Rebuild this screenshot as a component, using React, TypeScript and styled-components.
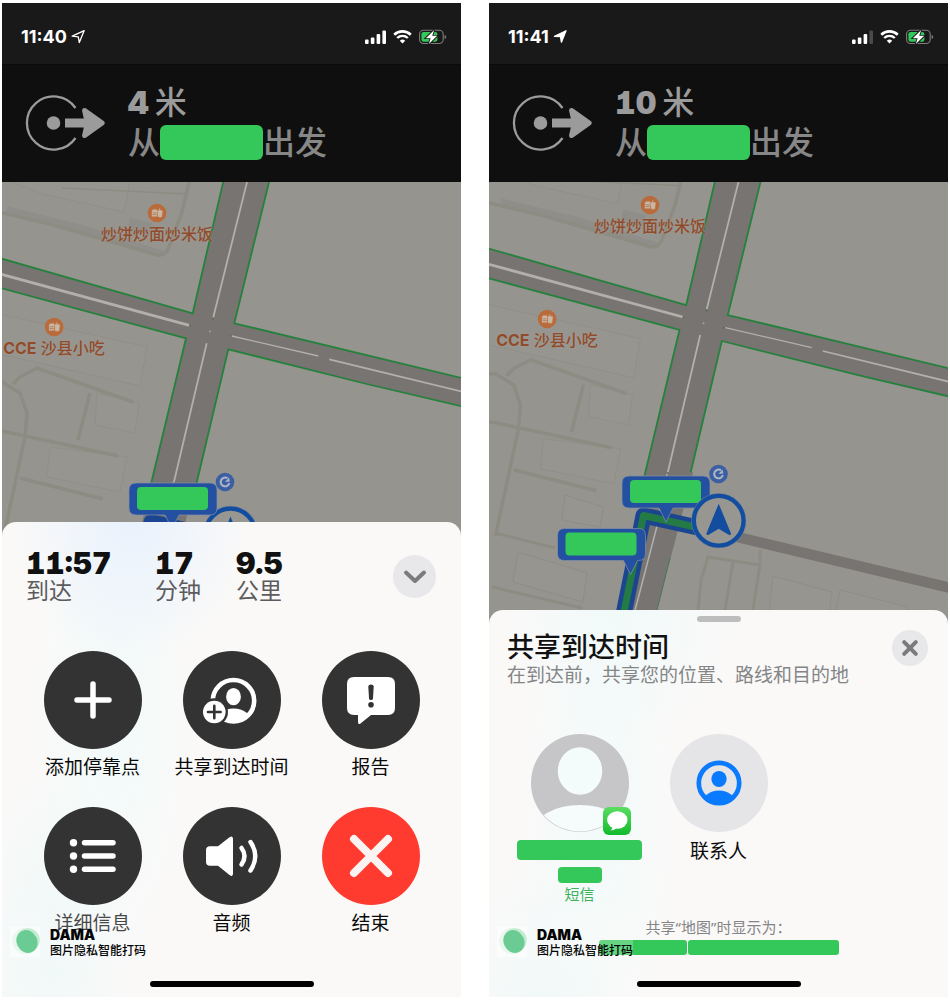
import React from "react";
import styled, { createGlobalStyle, css } from "styled-components";

const GlobalStyle = createGlobalStyle`
  *, *::before, *::after { box-sizing: border-box; }
  body {
    margin: 0;
    background: #fff;
    font-family: Inter, "Noto Sans", "Noto Sans CJK SC", sans-serif;
    color: #111;
  }
  button { font: inherit; color: inherit; border: 0; padding: 0; background: none; cursor: pointer; }
  h2, p { margin: 0; }
  svg { display: block; }
`;

const wideDigits = css`
  font-feature-settings: "tnum", "cv01";
  font-optical-sizing: none;
`;

const Page = styled.main`
  display: grid;
  grid-template-columns: 1fr 1fr;
  gap: 28px;
  min-height: 100vh;
  padding: 3px 2px;
`;

const Phone = styled.section`
  position: relative;
  display: flex;
  flex-direction: column;
  min-width: 0;
  overflow: hidden;
  background: #0f0f0f;
`;

const StatusBar = styled.header`
  display: flex;
  align-items: center;
  justify-content: space-between;
  height: 62px;
  padding: 6px 14px 0 19px;
  background: #191919;
  border-bottom: 1px solid #0a0a0a;
  color: #fff;
`;

const Clock = styled.div`
  display: flex;
  align-items: center;
  gap: 4px;
  font-size: 18px;
  font-weight: 700;
  line-height: 22px;
  font-optical-sizing: none;
`;

const StatusIcons = styled.div`
  display: flex;
  align-items: center;
  gap: 7px;
`;

const Banner = styled.div`
  display: flex;
  align-items: center;
  gap: 23px;
  height: 117px;
  padding: 0 23px 2px;
  background: #0f0f0f;
  color: #8f8f8f;
`;

const BannerLine = styled.p<{ $lead?: boolean }>`
  display: flex;
  align-items: center;
  gap: ${(p) => (p.$lead ? "6px" : "0")};
  font-size: 32px;
  line-height: 40px;
  font-weight: 500;
  color: ${(p) => (p.$lead ? "#9b9b9b" : "#878787")};
  white-space: nowrap;

  b {
    font-weight: 900;
    ${wideDigits}
  }
`;

const Redaction = styled.span<{ $w: number; $h: number; $r?: number }>`
  display: block;
  flex: none;
  width: ${(p) => p.$w}px;
  height: ${(p) => p.$h}px;
  border-radius: ${(p) => p.$r ?? 4}px;
  background: #34c759;
`;

const MapArea = styled.div`
  position: relative;
  flex: 1;
  min-height: 280px;
  margin-bottom: -14px;
  overflow: hidden;
  background: #96948e;
`;

const MapCanvas = styled.svg`
  position: absolute;
  inset: 0 0 auto 0;
  width: 100%;
  height: auto;
`;

const Poi = styled.div<{ $x: number; $y: number }>`
  position: absolute;
  left: ${(p) => p.$x}px;
  top: ${(p) => p.$y}px;
  transform: translateX(-50%);
  display: flex;
  flex-direction: column;
  align-items: center;
  gap: 1px;
  font-size: 16px;
  font-weight: 500;
  line-height: 20px;
  color: #914b2b;
  white-space: nowrap;
  text-shadow: 0 0 2px #a5a29a;

  b { font-weight: 700; }
`;

const Sheet = styled.div<{ $blue?: boolean }>`
  position: relative;
  display: flex;
  flex-direction: column;
  border-radius: 14px 14px 0 0;
  background:
    radial-gradient(ellipse 120px 140px at 130px 0, ${(p) => (p.$blue ? "rgba(226, 238, 255, 0.7)" : "rgba(238, 250, 250, 0.7)")}, transparent),
    radial-gradient(ellipse 80px 240px at 110px 200px, rgba(238, 251, 251, 0.7), transparent),
    radial-gradient(ellipse 80px 180px at 50px 420px, rgba(232, 249, 249, 0.6), transparent),
    #faf9f8;
`;

const TripHeader = styled.div`
  display: flex;
  align-items: center;
  justify-content: space-between;
  margin: 26px 25px 47px 24px;
`;

const Stats = styled.div`
  display: grid;
  grid-template-columns: 92px 44px 51px;
  gap: 37px;
`;

const Stat = styled.div`
  white-space: nowrap;

  strong {
    display: block;
    font-size: 30px;
    font-weight: 900;
    line-height: 30px;
    ${wideDigits}
  }
  span {
    display: block;
    font-size: 23px;
    line-height: 26px;
    color: #5c5c5e;
  }
`;

const RoundButton = styled.button<{ $size: number }>`
  display: grid;
  place-items: center;
  flex: none;
  width: ${(p) => p.$size}px;
  height: ${(p) => p.$size}px;
  border-radius: 50%;
  background: #e8e8ea;
`;

const TileGrid = styled.div`
  display: grid;
  grid-template-columns: repeat(3, 139px);
  justify-content: center;
  row-gap: 27px;
`;

const Tile = styled.button`
  display: flex;
  flex-direction: column;
  align-items: center;
  justify-content: flex-start;
  gap: 8px;
  font-size: 19px;
  line-height: 24px;
  white-space: nowrap;
  color: #0a0a0a;
`;

const Disc = styled.span<{ $color: string }>`
  position: relative;
  display: block;
  width: 98px;
  height: 98px;
  border-radius: 50%;
  background: ${(p) => p.$color};
`;

const AppBadge = styled.span`
  position: absolute;
  right: -2px;
  bottom: -3px;
`;

const TripTiles = styled(TileGrid)`
  margin-bottom: 45px;

  ${Tile} { gap: 7px; }
`;

const ContactDetails = styled.span`
  display: flex;
  flex-direction: column;
  align-items: center;
  gap: 7px;
`;

const Channel = styled.span`
  margin-top: -7px;
  font-size: 15px;
  color: #3db25c;
`;

const Grabber = styled.span`
  width: 44px;
  height: 6px;
  margin: 6px auto 8px;
  border-radius: 3px;
  background: #bdbdbe;
`;

const ShareHeader = styled.div`
  display: flex;
  align-items: flex-start;
  justify-content: space-between;
  margin: 0 20px 48px 18px;

  h2 {
    font-size: 27px;
    line-height: 36px;
    font-weight: 500;
  }
  p {
    font-size: 19px;
    line-height: 20px;
    color: #858587;
    white-space: nowrap;
  }
`;

const ShareFooter = styled.div`
  display: flex;
  flex-direction: column;
  align-items: center;
  gap: 3px;
  margin: 10px 0 26px;
  font-family: "Noto Sans", "Noto Sans CJK SC", sans-serif;
  font-size: 15px;
  line-height: 20px;
  color: #858587;
`;

const RedactedName = styled.div`
  display: flex;
  gap: 1px;
`;

const HomeBar = styled.span`
  width: 164px;
  height: 6px;
  margin: 0 auto 10px;
  border-radius: 3px;
  background: #000;
`;

const Watermark = styled.div`
  position: absolute;
  left: 8px;
  bottom: 36px;
  display: flex;
  align-items: flex-end;
  gap: 10px;
  height: 50px;
  color: #050505;
  background: rgba(250, 252, 252, 0.25);

  svg { margin-bottom: 4px; }
  strong { display: block; font-size: 14px; font-weight: 900; line-height: 16px; }
  span { display: block; font-size: 12px; font-weight: 500; line-height: 16px; padding-bottom: 2px; }
`;

const LocationArrow = ({ filled }: { filled?: boolean }) => (
  <svg width="15" height="15" viewBox="0 0 15 15" aria-hidden="true">
    <path
      d={filled ? "M1.500 7.400 13 1.800 8.400 13.200 7.500 7.600z" : "M1.200 7.200 13.200 1.600 8.300 13.600 7.300 7.900z"}
      fill={filled ? "#fff" : "none"}
      stroke="#fff"
      strokeWidth="1.300"
      strokeLinejoin="round"
    />
  </svg>
);

const Signal = ({ bars }: { bars: number }) => (
  <svg width="21" height="14" viewBox="0 0 21 14" aria-hidden="true">
    {[4.5, 6.5, 10, 13.5].map((h, i) => (
      <rect key={i} x={i * 5.8} y={14 - h} width="3.6" height={h} rx="1.1" fill={i < bars ? "#fff" : "#4b4b4b"} />
    ))}
  </svg>
);

const Wifi = () => (
  <svg width="19" height="14" viewBox="0 0 19 14" aria-hidden="true">
    <path d="M1.2 4.7a12 12 0 0 1 16.6 0" fill="none" stroke="#fff" strokeWidth="2.6" />
    <path d="M4.2 8a7.6 7.6 0 0 1 10.6 0" fill="none" stroke="#fff" strokeWidth="2.4" />
    <path d="M6.8 10.7a4 4 0 0 1 5.4 0L9.5 13.6z" fill="#fff" />
  </svg>
);

const Battery = () => (
  <svg width="28" height="16" viewBox="0 0 28 16" aria-hidden="true">
    <rect x=".6" y="1.3" width="23.6" height="13.2" rx="4" fill="none" stroke="#7d7d7d" strokeWidth="1.1" />
    <path d="M25.6 6v4q1.7-.6 1.7-2t-1.7-2z" fill="#7d7d7d" />
    <rect x="2.4" y="3.1" width="16" height="9.6" rx="2.2" fill="#34c759" />
    <path d="M15.200 1 6.800 9.200h4.800L9.800 15 18.200 6.800h-5z" fill="#fff" stroke="#191919" strokeWidth="1.800" paintOrder="stroke" />
  </svg>
);

const DepartIcon = () => (
  <svg width="80" height="56" viewBox="0 0 80 56" fill="#9b9b9b" aria-hidden="true">
    <path d="M50.5 13A26.6 26.6 0 1 0 50.5 43" fill="none" stroke="#9b9b9b" strokeWidth="2.3" />
    <circle cx="28.5" cy="28" r="6.8" />
    <path d="M40 23.6h18.8L57 15.5q.2-3.6 3.8-2.2L79 26.3q1.5 1.7 0 3.4L60.800 42.700q-3.600 1.400-3.800-2.200L58.800 32.400H40z" />
  </svg>
);

const Status = ({ time, filled, bars }: { time: string; filled?: boolean; bars: number }) => (
  <StatusBar>
    <Clock>
      {time}
      <LocationArrow filled={filled} />
    </Clock>
    <StatusIcons>
      <Signal bars={bars} />
      <Wifi />
      <Battery />
    </StatusIcons>
  </StatusBar>
);

const Direction = ({ distance }: { distance: string }) => (
  <Banner>
    <DepartIcon />
    <div>
      <BannerLine $lead>
        <b>{distance}</b>
        <span>米</span>
      </BannerLine>
      <BannerLine>
        从
        <Redaction $w={103} $h={35} $r={6} />
        出发
      </BannerLine>
    </div>
  </Banner>
);

const FoodIcon = () => (
  <svg width="20" height="20" viewBox="0 0 20 20" aria-hidden="true">
    <circle cx="10" cy="10" r="9.3" fill="#b96b3c" />
    <path d="M4.800 8.500 5.800 6.600h4.200v7H4.800z" fill="#c9b7a4" />
    <path d="M5.500 9.800h4M5.500 11.600h4" stroke="#a9673f" strokeWidth=".7" />
    <path d="M10.800 7.800h4.400l-.6 6h-3.200zM12.700 7.600V5.400" fill="#c9b7a4" stroke="#c9b7a4" strokeWidth=".9" />
  </svg>
);

const Streets = () => (
  <>
    <g fill="#97958f" stroke="#908f88" strokeWidth="1">
      <path d="M-20 128 145 165 138 204-20 168z" />
      <path d="M95 211 137 221 133 251 93 243z" />
      <path d="M48 265 125 275 118 310 45 295z" />
      <path d="M-20-12 130-12 122 30 40 12z" />
      <path d="M128 36 150 41 147 53 126 47z" fill="#8f8e8a" stroke="none" />
    </g>
    <path d="M5 28 82 47 160 72" fill="none" stroke="#8f8e8a" strokeWidth="7" />
    <g fill="none" stroke="#8d8c82" strokeWidth="3.500" strokeLinejoin="round">
      <path d="M-20 26 48 42 121 63 155 73Q165 74 168 62L180 30 190-12" />
      <path d="M-20 200H0L18 211 25 231 23 255 0 362" />
      <path d="M11 202 18 195 35 186 131 220" />
      <path d="M88 211 76 258M-20 246 0 249 116 274M18 296 101 317" />
      <path d="M60 6 186 12" strokeWidth="1.500" />
    </g>
  </>
);

const Roads = () => (
  <>
    <path d="M149 302 184 156.300-20 101V71L190.700 131.300 224-12H270L232.300 141.300 480 201V229L364.700 202 226.300 167.300 192 312z" fill="#777472" />
    <g fill="none" stroke="#25813c" strokeWidth="1.800">
      <path d="M-20 71 190.700 131.300 224-12M270-12 232.300 141.300 480 201" />
      <path d="M-20 101 184 156.300 149 302M192 312 226.300 167.300 364.700 202 480 229" />
    </g>
    <g fill="none" stroke="#b2b0ac" strokeWidth="1.800">
      <path d="M248-12 211.300 135.300M204.700 161.300 171 304" />
      <path d="M-20 87 187.300 143.300" strokeWidth="2.800" />
      <path d="M229.700 154 316.300 174" strokeWidth="1.300" />
      <path d="M327.300 177.300 480 214.500" />
    </g>
    <g fill="#55734f">
      <circle cx="211" cy="137" r="1" />
      <circle cx="188" cy="143.500" r="1" />
      <circle cx="208" cy="149.500" r="1" fill="#a5a39e" />
      <circle cx="228.500" cy="154" r="1" />
    </g>
  </>
);

const Callout = ({ x, y, tip }: { x: number; y: number; tip: number }) => (
  <g transform={`translate(${x} ${y})`}>
    <path
      d={`M7 0H81Q88 0 88 7V25Q88 32 81 32H${tip + 7}L${tip} 46 ${tip - 7} 32H7Q0 32 0 25V7Q0 0 7 0z`}
      fill="#2450a1"
      stroke="#8490a5"
      strokeWidth=".7"
    />
    <rect x="8" y="4" width="71" height="23" rx="4" fill="#34c759" />
  </g>
);

const Puck = ({ x, y }: { x: number; y: number }) => (
  <g transform={`translate(${x} ${y})`}>
    <circle r="27.500" fill="#66789a" />
    <circle r="24.800" fill="#989690" stroke="#124da0" strokeWidth="4.200" />
    <path d="M0-17 12 12Q13 15 10 14L0 8-10 14Q-13 15-12 12z" fill="#124da0" />
  </g>
);

const TransitBadge = ({ x, y }: { x: number; y: number }) => (
  <g transform={`translate(${x} ${y})`}>
    <circle r="9.300" fill="#3c5fa3" />
    <path d="M2.500-3.800A4.400 4.400 0 1 0 4.400 1" fill="none" stroke="#aeb6c4" strokeWidth="2" />
    <path d="M0 0 4-4.500 4.800-.6z" fill="#aeb6c4" />
  </g>
);

const TripMap = () => (
  <MapArea>
    <MapCanvas viewBox="0 0 459 460" aria-hidden="true">
      <Streets />
      <Roads />
      <path d="M149 300 139 346H182L193 300z" fill="#777472" />
      <path d="M171 300 162 346" stroke="#b2b0ac" strokeWidth="1.500" />
      <path d="M142 360 149 339 229 358" fill="none" stroke="#1b4590" strokeWidth="14" strokeLinejoin="round" />
      <TransitBadge x={223} y={300} />
      <Puck x={228.500} y={351.500} />
      <Callout x={127} y={301} tip={43} />
    </MapCanvas>
    <Poi $x={155} $y={21}>
      <FoodIcon />
      <span>炒饼炒面炒米饭</span>
    </Poi>
    <Poi $x={52} $y={135}>
      <FoodIcon />
      <span><b>CCE</b> 沙县小吃</span>
    </Poi>
  </MapArea>
);

const ShareMap = () => (
  <MapArea>
    <MapCanvas viewBox="0 0 459 460" aria-hidden="true">
      <g transform="translate(6.500 -8.300)">
        <Streets />
      </g>
      <g fill="#97958f" stroke="#8e8d86" strokeWidth="1">
        <path d="M76 313 114 325 111 345 73 338zM29 370 98 391 94 420 24 400z" />
        <path d="M284 394 343 410 339 440H279zM351 408 419 425 415 440H345z" />
      </g>
      <g fill="none" stroke="#8d8c82" strokeWidth="3">
        <path d="M6 351 66 366M3 405 93 426" />
        <path d="M208 440 212 398 219 375 271 383 262 440M271 383V368M244 380 234 440" />
      </g>
      <g transform="translate(6.500 -8.300)">
        <Roads />
      </g>
      <path d="M157 290 142 440H165L204 290z" fill="#777472" />
      <path d="M178 292 168 344 143 440" fill="none" stroke="#b2b0ac" strokeWidth="1.500" />
      <path d="M181 376 165 440" stroke="#4a7a55" strokeWidth="1" />
      <path d="M215 347 470 408" stroke="#777472" strokeWidth="10.500" />
      <g fill="none" strokeLinejoin="round">
        <path d="M229 350 154.500 333.500 133 440" stroke="#1b4590" strokeWidth="16" />
        <path d="M229 350 154.500 333.500 133 440" stroke="#247a45" strokeWidth="7" />
      </g>
      <Callout x={133} y={294} tip={44} />
      <Callout x={68.500} y={346.500} tip={73} />
      <TransitBadge x={229.500} y={292} />
      <Puck x={229.700} y={338.700} />
    </MapCanvas>
    <Poi $x={161} $y={13}>
      <FoodIcon />
      <span>炒饼炒面炒米饭</span>
    </Poi>
    <Poi $x={58} $y={127}>
      <FoodIcon />
      <span><b>CCE</b> 沙县小吃</span>
    </Poi>
  </MapArea>
);

const DARK = "#333333";

const Glyph = ({ children }: { children: React.ReactNode }) => (
  <svg width="98" height="98" viewBox="-49 -49 98 98" aria-hidden="true">
    {children}
  </svg>
);

const glyphs = {
  add: <path d="M0-16V16M-16 0H16" stroke="#fff" strokeWidth="5.500" strokeLinecap="round" />,
  share: (
    <>
      <clipPath id="share-ring"><circle cx="1.500" cy=".7" r="22" /></clipPath>
      <circle cx="1.500" cy=".7" r="20.700" fill="none" stroke="#fff" strokeWidth="4.600" />
      <ellipse cx="1.500" cy="-3.300" rx="7.400" ry="8.600" fill="#fff" />
      <ellipse cx="1.500" cy="22" rx="18" ry="13.500" fill="#fff" clipPath="url(#share-ring)" />
      <circle cx="-17.700" cy="12" r="13.700" fill={DARK} />
      <circle cx="-17.700" cy="12" r="11.300" fill="#fff" />
      <path d="M-17.700 5.700V18.300M-24 12H-11.400" stroke={DARK} strokeWidth="2.600" strokeLinecap="round" />
    </>
  ),
  report: (
    <>
      <path d="M-17-23H17Q24 -23 24-16V8Q24 15 17 15H0L-10.500 23.500Q-13 25-13 22V15H-17Q-24 15-24 8V-16Q-24-23-17-23z" fill="#fff" />
      <path d="M-2.700-13.500Q-2.600-15.500 0-15.500T2.700-13.500L2-1.500Q1.900 0 0 0T-2-1.500z" fill={DARK} />
      <circle cy="4.700" r="2.800" fill={DARK} />
    </>
  ),
  details: (
    <g fill="#fff" stroke="#fff">
      {[-13.300, 0, 13.300].map((y) => (
        <React.Fragment key={y}>
          <circle cx="-19.500" cy={y} r="3.700" stroke="none" />
          <path d={`M-8.500 ${y}H20`} strokeWidth="5.500" strokeLinecap="round" />
        </React.Fragment>
      ))}
    </g>
  ),
  audio: (
    <g fill="none" stroke="#fff" strokeWidth="4.500" strokeLinecap="round">
      <path d="M-22-9.700H-14L-2.500-18.700Q1-21 1-17V17.500Q1 21.500-2.500 19L-14 9.700H-22Q-26 9.700-26 5.700V-5.700Q-26-9.700-22-9.700z" fill="#fff" stroke="none" />
      <path d="M9.500-8Q15.500 0 9.500 8.500" />
      <path d="M18.500-14Q28 0 18.500 14.500" />
    </g>
  ),
  end: <path d="M-17-17 17 17M17-17-17 17" stroke="#fbf3f2" strokeWidth="8" strokeLinecap="round" />,
};

const actions: { id: keyof typeof glyphs; label: string; color?: string }[] = [
  { id: "add", label: "添加停靠点" },
  { id: "share", label: "共享到达时间" },
  { id: "report", label: "报告" },
  { id: "details", label: "详细信息" },
  { id: "audio", label: "音频" },
  { id: "end", label: "结束", color: "#ff3b30" },
];

const stats = [
  ["11:57", "到达"],
  ["17", "分钟"],
  ["9.5", "公里"],
];

const DamaMark = () => (
  <Watermark>
    <svg width="30" height="30" viewBox="0 0 30 30" aria-hidden="true">
      <rect width="30" height="30" fill="#fff" opacity=".5" />
      <circle cx="15.500" cy="14" r="13.300" fill="#e9f7ee" />
      <circle cx="18" cy="13" r="11.800" fill="#c3ecd2" />
      <ellipse cx="17" cy="14.500" rx="10.300" ry="11.700" transform="rotate(-25 17 14.500)" fill="#6bcc93" />
    </svg>
    <div>
      <strong>DAMA</strong>
      <span>图片隐私智能打码</span>
    </div>
  </Watermark>
);

const Avatar = () => (
  <Glyph>
    <clipPath id="avatar-disc"><circle r="48.500" /></clipPath>
    <ellipse cy="-12" rx="22.300" ry="23.800" fill="#f4fbfb" />
    <ellipse cy="49" rx="47" ry="27" fill="#f6fbfb" clipPath="url(#avatar-disc)" />
  </Glyph>
);

const MessagesIcon = () => (
  <svg width="28" height="28" viewBox="0 0 28 28" aria-hidden="true">
    <linearGradient id="messages" x1="0" y1="0" x2="0" y2="1">
      <stop offset="0" stopColor="#5bdd62" />
      <stop offset="1" stopColor="#12ba2c" />
    </linearGradient>
    <rect width="28" height="28" rx="6" fill="url(#messages)" />
    <ellipse cx="14.300" cy="13" rx="10.200" ry="8.700" fill="#fff" />
    <path d="M9.500 19.500Q9.500 22 7.500 23.200 11.500 23.500 14 20.500z" fill="#fff" />
  </svg>
);

const ContactsIcon = () => (
  <Glyph>
    <clipPath id="contacts-ring"><circle r="21" /></clipPath>
    <circle r="20.200" fill="none" stroke="#0a7aff" strokeWidth="4.700" />
    <ellipse cy="-4" rx="7.600" ry="8" fill="#0a7aff" />
    <ellipse cy="21" rx="17" ry="13.500" fill="#0a7aff" clipPath="url(#contacts-ring)" />
  </Glyph>
);

export default function App() {
  return (
    <>
      <GlobalStyle />
      <Page>
        <Phone>
          <Status time="11:40" bars={4} />
          <Direction distance="4" />
          <TripMap />
          <Sheet $blue>
            <TripHeader>
              <Stats>
                {stats.map(([value, unit]) => (
                  <Stat key={unit}>
                    <strong>{value}</strong>
                    <span>{unit}</span>
                  </Stat>
                ))}
              </Stats>
              <RoundButton $size={43} aria-label="收起">
                <svg width="24" height="16" viewBox="0 0 24 16" aria-hidden="true">
                  <path d="M3 4.500 12 13 21 4.500" fill="none" stroke="#7b7b7e" strokeWidth="4" strokeLinecap="round" strokeLinejoin="round" />
                </svg>
              </RoundButton>
            </TripHeader>
            <TripTiles>
              {actions.map((a) => (
                <Tile key={a.id}>
                  <Disc $color={a.color ?? DARK}>
                    <Glyph>{glyphs[a.id]}</Glyph>
                  </Disc>
                  {a.label}
                </Tile>
              ))}
            </TripTiles>
            <HomeBar />
          </Sheet>
          <DamaMark />
        </Phone>

        <Phone>
          <Status time="11:41" filled bars={3} />
          <Direction distance="10" />
          <ShareMap />
          <Sheet>
            <Grabber />
            <ShareHeader>
              <div>
                <h2>共享到达时间</h2>
                <p>在到达前，共享您的位置、路线和目的地</p>
              </div>
              <RoundButton $size={36} aria-label="关闭">
                <svg width="18" height="18" viewBox="0 0 18 18" aria-hidden="true">
                  <path d="M3.200 3.200 14.800 14.800M14.800 3.200 3.200 14.800" stroke="#7b7b7e" strokeWidth="4" strokeLinecap="round" />
                </svg>
              </RoundButton>
            </ShareHeader>
            <TileGrid>
              <Tile aria-label="短信">
                <Disc $color="#c6c5c8">
                  <Avatar />
                  <AppBadge><MessagesIcon /></AppBadge>
                </Disc>
                <ContactDetails>
                  <Redaction $w={125} $h={20} />
                  <Redaction $w={44} $h={16} />
                  <Channel>短信</Channel>
                </ContactDetails>
              </Tile>
              <Tile>
                <Disc $color="#e5e4e7">
                  <ContactsIcon />
                </Disc>
                联系人
              </Tile>
            </TileGrid>
            <ShareFooter>
              <p>共享“地图”时显示为：</p>
              <RedactedName>
                <Redaction $w={88} $h={15} $r={3} />
                <Redaction $w={151} $h={15} $r={3} />
              </RedactedName>
            </ShareFooter>
            <HomeBar />
          </Sheet>
          <DamaMark />
        </Phone>
      </Page>
    </>
  );
}
